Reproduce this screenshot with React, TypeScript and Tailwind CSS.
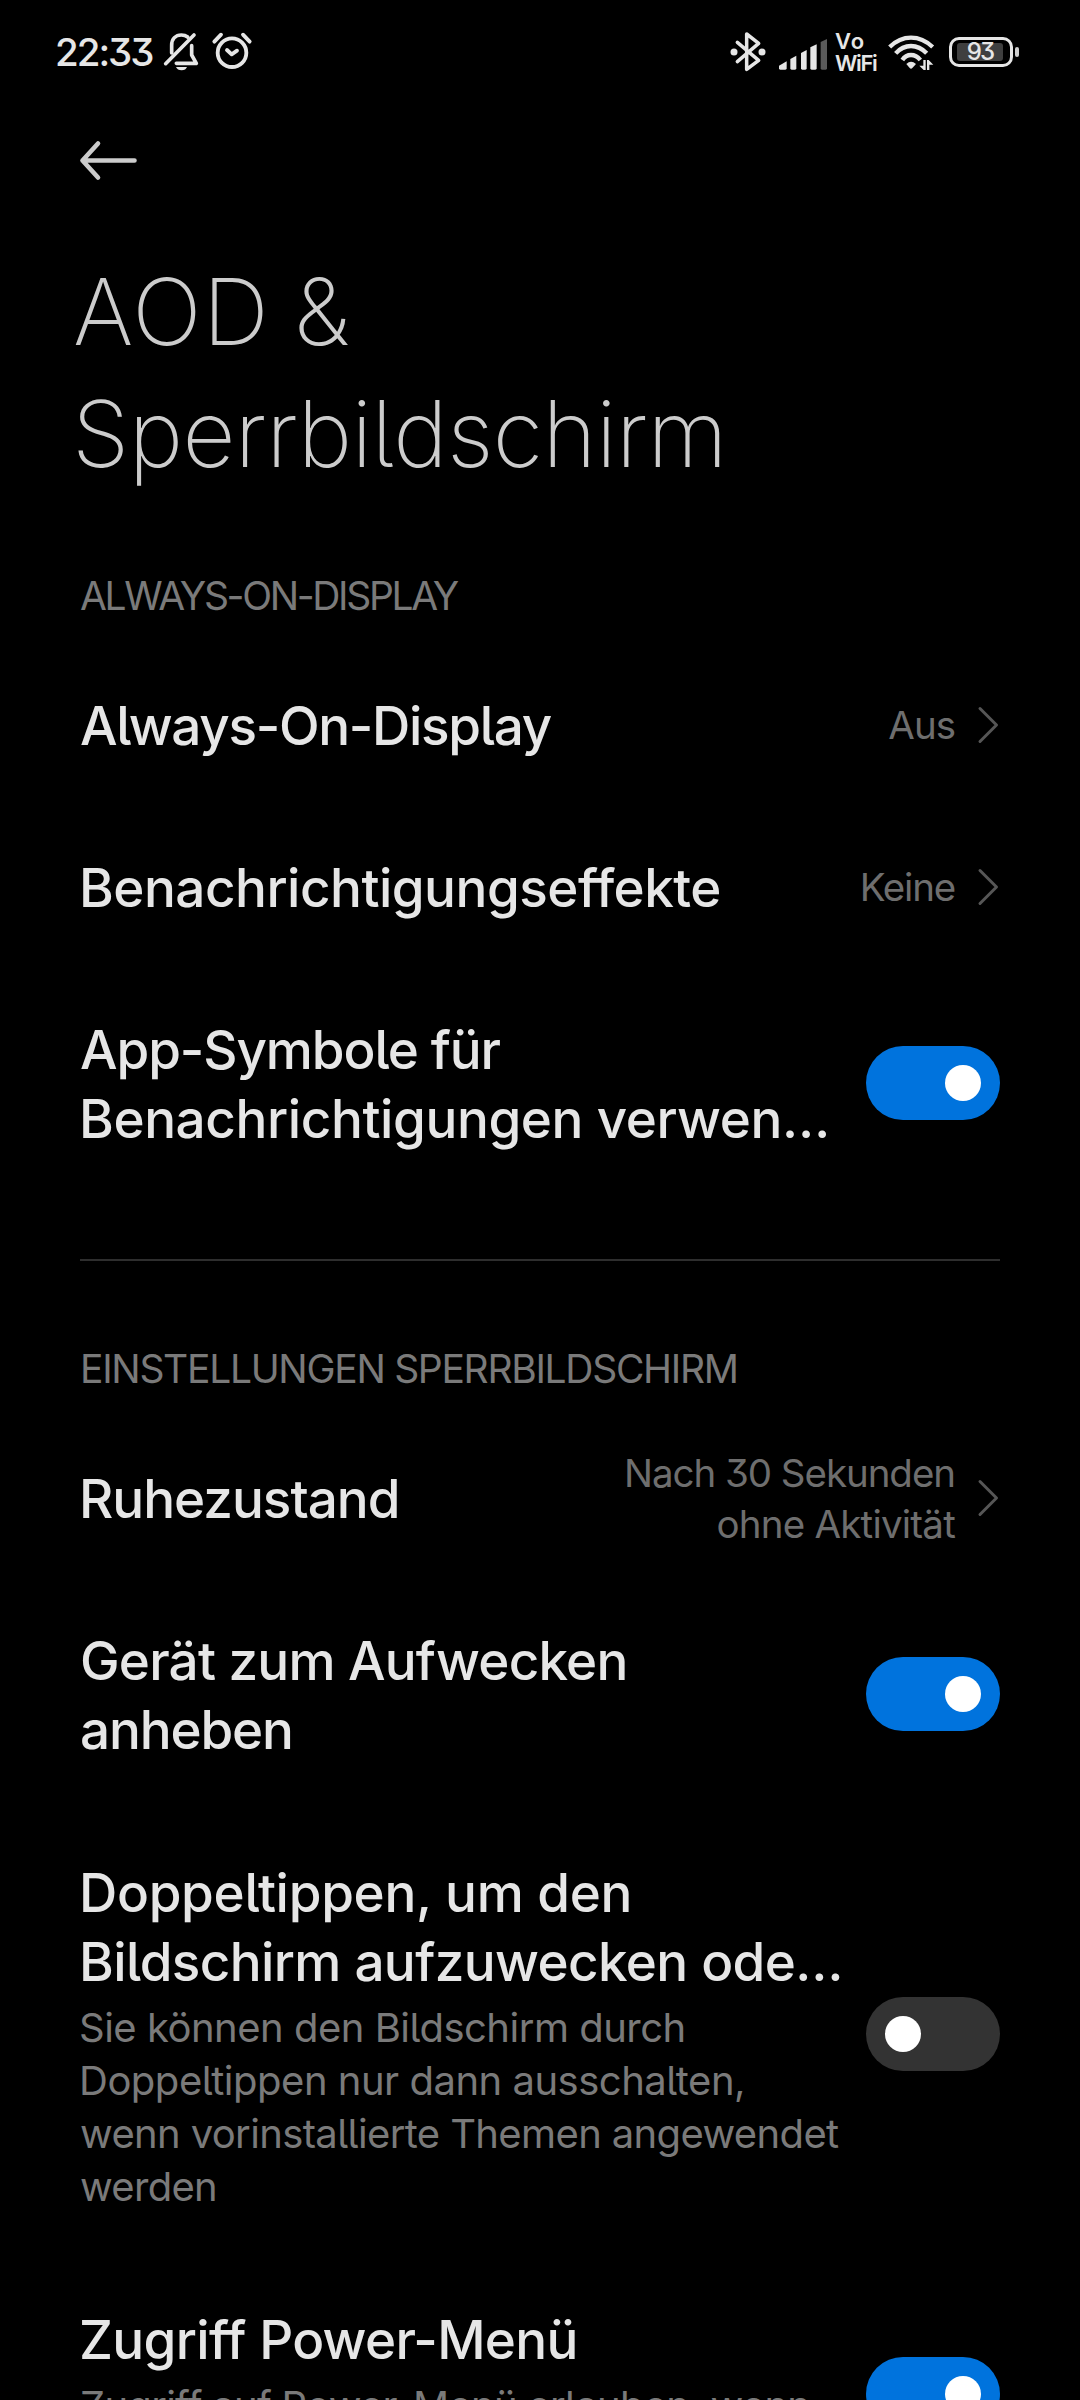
import { ReactNode, useState } from "react";
import clsx from "clsx";

type Line = { text: string; tracking: string };

function Lines({ lines }: { lines: Line[] }) {
  return (
    <>
      {lines.map((line) => (
        <span
          key={line.text}
          className={clsx("block whitespace-nowrap", line.tracking)}
        >
          {line.text}
        </span>
      ))}
    </>
  );
}

function BellOffIcon() {
  return (
    <svg
      width="38"
      height="42"
      viewBox="363 36 114 126"
      className="ml-[10px] shrink-0"
      fill="none"
      stroke="currentColor"
      strokeWidth="11"
      strokeLinecap="round"
      strokeLinejoin="round"
    >
      <path d="M371 134 456 48" />
      <path d="M389 102V79c0-19 12-31 29-31 8 0 14 2 19 6" />
      <path d="M449 80v28l14 25h-60" />
      <path d="M402 144h33c-2 6-8 10-16 10s-15-4-17-10Z" fill="currentColor" stroke="none" />
    </svg>
  );
}

function AlarmIcon() {
  return (
    <svg
      width="42"
      height="42"
      viewBox="509 36 126 126"
      className="ml-[10px] shrink-0"
      fill="none"
      stroke="currentColor"
      strokeWidth="11.5"
      strokeLinecap="round"
      strokeLinejoin="round"
    >
      <circle cx="572" cy="101" r="43" />
      <path d="M519 68 539 47M625 68 605 47" />
      <path d="M557 93 571 106 587 95" />
    </svg>
  );
}

function BluetoothIcon() {
  return (
    <svg
      width="38"
      height="42"
      viewBox="57 33 114 126"
      className="shrink-0"
      fill="none"
      stroke="currentColor"
      strokeWidth="10.5"
      strokeLinecap="round"
      strokeLinejoin="round"
    >
      <path d="M82 67 146 121 110 148V42L146 70 82 125" />
      <g fill="currentColor" stroke="none">
        <circle cx="72" cy="96" r="10.5" />
        <circle cx="156" cy="96" r="10.5" />
      </g>
    </svg>
  );
}

function SignalIcon() {
  return (
    <svg
      width="50"
      height="34"
      viewBox="204 46 150 102"
      className="mt-[3px] mr-[-1px] ml-[11px] shrink-0"
      fill="currentColor"
    >
      <path d="M207 132 230 119V140q0 4-4 4H211q-4 0-4-4Z" />
      <path d="M241 112 259 102V140q0 4-4 4H245q-4 0-4-4Z" />
      <path d="M273 94 290 85V140q0 4-4 4H277q-4 0-4-4Z" />
      <path d="M301 77 320 68V140q0 4-4 4H305q-4 0-4-4Z" />
      <path d="M332 61 351 52V140q0 4-4 4H336q-4 0-4-4Z" fill="#5a5a5a" />
    </svg>
  );
}

function WifiIcon() {
  return (
    <svg
      width="48"
      height="38"
      viewBox="530 40 144 114"
      className="ml-[10px] shrink-0"
      fill="none"
      stroke="currentColor"
      strokeWidth="13"
    >
      <path d="M538 82Q567 54 602 54T667 82" />
      <path d="M556 101Q576 79 602 79T649 101" />
      <path d="M576 121Q586 106 602 106T630 121" />
      <g fill="currentColor" stroke="none">
        <path d="M588 133Q602 120 617 133L606 145Q602 149 598 145Z" />
        <path d="M639 121h7v30h-6l-13-13h12ZM650 151v-30h5l14 14h-12v16Z" />
      </g>
    </svg>
  );
}

function Battery({ level }: { level: number }) {
  return (
    <div className="ml-[14px] flex items-center gap-[2px]">
      <div className="flex h-[30px] w-[64px] items-center justify-center rounded-[10px] border-[3px] border-[#e6e6e6]">
        <div className="mr-[2px] flex h-[18px] w-[46px] items-center justify-center rounded-[3px] bg-[#3f3f3f] text-[24px] leading-none font-[480] tracking-[-1.8px]">
          {level}
        </div>
      </div>
      <div className="h-[10px] w-[4px] rounded-sm bg-[#cfcfcf]" />
    </div>
  );
}

function StatusBar() {
  return (
    <div className="flex h-[106px] shrink-0 items-center pr-[61px] pb-[2px] pl-[55px] text-[#e6e6e6]">
      <span className="mt-px text-[38.5px] leading-none font-medium tracking-[-2px]">
        22:33
      </span>
      <BellOffIcon />
      <AlarmIcon />
      <div className="ml-auto flex items-center">
        <BluetoothIcon />
        <SignalIcon />
        <div className="ml-[8px] w-[42px] text-[22px] leading-[22px] font-semibold">
          <div className="tracking-[1px]">Vo</div>
          <div className="tracking-[-1.4px]">WiFi</div>
        </div>
        <WifiIcon />
        <Battery level={93} />
      </div>
    </div>
  );
}

function Toggle({ defaultOn = false }: { defaultOn?: boolean }) {
  const [on, setOn] = useState(defaultOn);

  return (
    <button
      type="button"
      role="switch"
      aria-checked={on}
      onClick={() => setOn(!on)}
      className={clsx(
        "flex h-[74px] w-[134px] shrink-0 items-center rounded-full px-[19px]",
        on ? "justify-end bg-[#0073dd]" : "justify-start bg-[#333333]",
      )}
    >
      <span className="size-9 rounded-full bg-white" />
    </button>
  );
}

function Chevron() {
  return (
    <svg
      width="23"
      height="40"
      viewBox="0 0 23 40"
      className="ml-[22px] shrink-0"
      fill="none"
      stroke="#565656"
      strokeWidth="3"
      strokeLinecap="round"
      strokeLinejoin="round"
    >
      <path d="M3 3.5 19.5 20 3 36.5" />
    </svg>
  );
}

function SectionTitle({ line }: { line: Line }) {
  return (
    <h2 className="mb-[22px] shrink-0 px-20 text-[39px] leading-[52px] text-[#7a7a7a]">
      <Lines lines={[line]} />
    </h2>
  );
}

function Row({
  title,
  description,
  height = "h-[162px]",
  children,
}: {
  title: Line[];
  description?: Line[];
  height?: string;
  children: ReactNode;
}) {
  return (
    <div className={clsx("flex shrink-0 items-center px-20", height)}>
      <div className="min-w-0 flex-1 pt-[3px]">
        <h3 className="text-[53px] leading-[69px] font-[460] text-[#e6e6e6]">
          <Lines lines={title} />
        </h3>
        {description && (
          <p className="mt-1 text-[40px] leading-[53px] text-[#7a7a7a]">
            <Lines lines={description} />
          </p>
        )}
      </div>
      {children}
    </div>
  );
}

function Value({ lines }: { lines: Line[] }) {
  return (
    <>
      <div className="pt-px text-right text-[38.5px] leading-[51px] text-[#6e6e6e]">
        <Lines lines={lines} />
      </div>
      <Chevron />
    </>
  );
}

export default function App() {
  return (
    <div className="flex h-[2400px] w-[1080px] flex-col overflow-hidden bg-black font-[Inter,Roboto,sans-serif] [font-feature-settings:'cv05','cv09']">
      <StatusBar />

      {/* Header */}
      <header className="h-[464px] shrink-0">
        <button type="button" aria-label="Zurück" className="mt-[32px] ml-[78px] block">
          <svg
            width="62"
            height="46"
            viewBox="0 0 62 46"
            fill="none"
            stroke="#cccccc"
            strokeWidth="4.6"
            strokeLinecap="round"
            strokeLinejoin="round"
          >
            <path d="M20 5.5 4.5 22.5 20 39.5M4.5 22.5H56.5" />
          </svg>
        </button>
        <h1 className="mt-[67px] ml-[73px] text-[92px] leading-[122px] font-[250] text-[#cccccc]">
          <Lines
            lines={[
              { text: "AOD &", tracking: "tracking-[1.2px] [word-spacing:-3px]" },
              { text: "Sperrbildschirm", tracking: "ml-[-1px] tracking-[-0.58px]" },
            ]}
          />
        </h1>
      </header>

      {/* Always-on display */}
      <SectionTitle line={{ text: "ALWAYS-ON-DISPLAY", tracking: "tracking-[-2.35px]" }} />
      <Row title={[{ text: "Always-On-Display", tracking: "tracking-[-1.3px]" }]}>
        <Value lines={[{ text: "Aus", tracking: "tracking-[-1px]" }]} />
      </Row>
      <Row
        title={[
          { text: "Benachrichtigungseffekte", tracking: "ml-[-1px] tracking-[-0.5px]" },
        ]}
      >
        <Value lines={[{ text: "Keine", tracking: "tracking-[-1.2px]" }]} />
      </Row>
      <Row
        height="h-[230px]"
        title={[
          { text: "App-Symbole für", tracking: "tracking-[-1.08px]" },
          { text: "Benachrichtigungen verwen…", tracking: "ml-[-1px] tracking-[-0.4px]" },
        ]}
      >
        <Toggle defaultOn />
      </Row>

      <hr className="mx-20 mt-[61px] mb-[82px] h-[2px] shrink-0 border-0 bg-[#2e2e2e]" />

      {/* Lock screen */}
      <SectionTitle
        line={{ text: "EINSTELLUNGEN SPERRBILDSCHIRM", tracking: "tracking-[-1.3px]" }}
      />
      <Row title={[{ text: "Ruhezustand", tracking: "ml-[-1px] tracking-[-1px]" }]}>
        <Value
          lines={[
            { text: "Nach 30 Sekunden", tracking: "tracking-[-1.05px]" },
            { text: "ohne Aktivität", tracking: "tracking-[-0.78px]" },
          ]}
        />
      </Row>
      <Row
        height="h-[230px]"
        title={[
          { text: "Gerät zum Aufwecken", tracking: "tracking-[-0.8px]" },
          { text: "anheben", tracking: "tracking-[-1.15px]" },
        ]}
      >
        <Toggle defaultOn />
      </Row>
      <Row
        height="h-[450px]"
        title={[
          { text: "Doppeltippen, um den", tracking: "ml-[-1px] tracking-[-0.3px]" },
          { text: "Bildschirm aufzuwecken ode…", tracking: "ml-[-1px] tracking-[-0.6px]" },
        ]}
        description={[
          { text: "Sie können den Bildschirm durch", tracking: "ml-[-1px] tracking-[-0.5px]" },
          { text: "Doppeltippen nur dann ausschalten,", tracking: "ml-[-1px] tracking-[-0.49px]" },
          { text: "wenn vorinstallierte Themen angewendet", tracking: "tracking-[-0.63px]" },
          { text: "werden", tracking: "tracking-[-0.7px]" },
        ]}
      >
        <Toggle />
      </Row>
      <Row
        height="h-[270px] pb-[53px]"
        title={[{ text: "Zugriff Power-Menü", tracking: "ml-[-1px] tracking-[-0.66px]" }]}
        description={[
          { text: "Zugriff auf Power-Menü erlauben, wenn", tracking: "tracking-[-0.72px]" },
        ]}
      >
        <div className="mt-[53px]">
          <Toggle defaultOn />
        </div>
      </Row>
    </div>
  );
}
